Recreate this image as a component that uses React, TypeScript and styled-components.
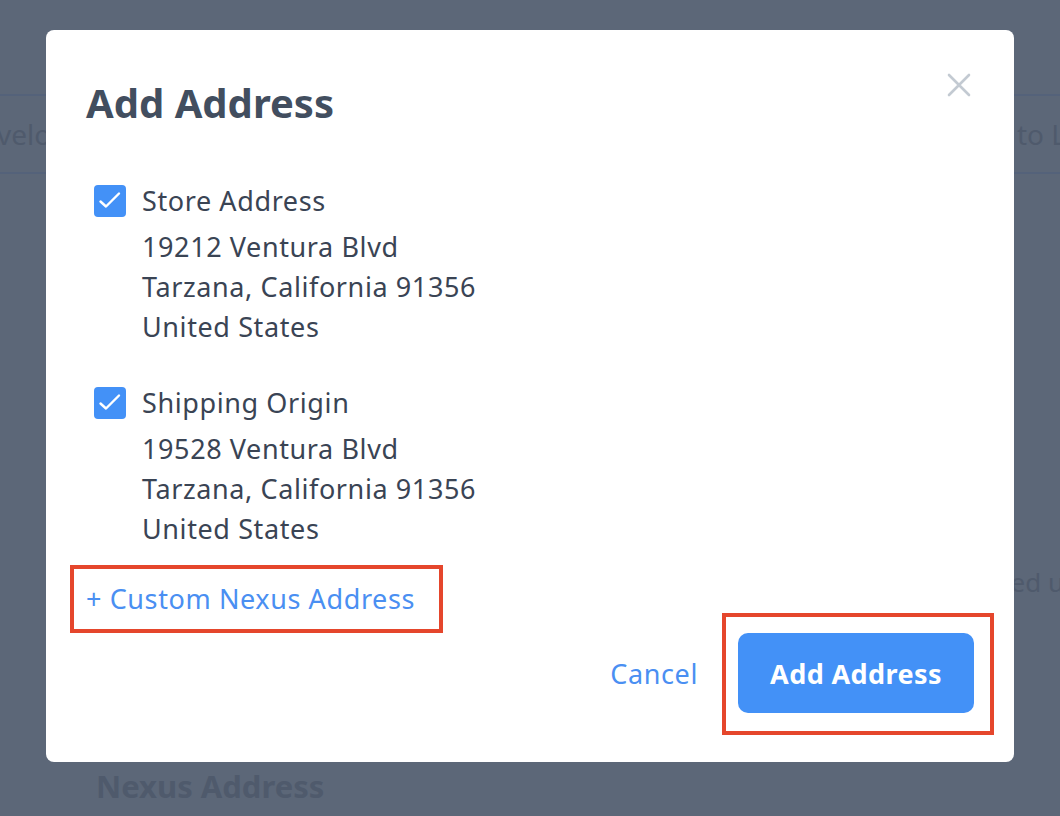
import React from "react";
import styled, { createGlobalStyle } from "styled-components";

const Global = createGlobalStyle`
  html, body { margin: 0; padding: 0; }
  body {
    width: 1060px;
    height: 816px;
    overflow: hidden;
    background: #5c6778;
    font-family: "Noto Sans", Lato, sans-serif;
  }
  * { box-sizing: border-box; }
`;

const Page = styled.div`
  position: relative;
  width: 1060px;
  height: 816px;
  overflow: hidden;
  background: #5c6778;
`;

const Backdrop = styled.div`
  display: flex;
  flex-direction: column;
  padding-top: 94px;
  height: 100%;
  color: #4f5a6c;
`;

const TabBar = styled.div`
  display: flex;
  justify-content: space-between;
  align-items: center;
  height: 80px;
  border-top: 2px solid #54627a;
  border-bottom: 2px solid #54627a;
  font-size: 28px;
  overflow: hidden;
`;

const TabText = styled.span<{ $edge: "left" | "right" }>`
  white-space: nowrap;
  margin-left: ${(p) => (p.$edge === "left" ? "-3px" : "0")};
  margin-right: ${(p) => (p.$edge === "right" ? "-6px" : "0")};
`;

const SideText = styled.div`
  align-self: flex-end;
  margin-top: 390px;
  margin-right: -4px;
  font-size: 26px;
  line-height: 36px;
`;

const BackHeading = styled.div`
  margin-top: 168px;
  margin-left: 96px;
  font-size: 31px;
  line-height: 36px;
  font-weight: 700;
`;

const Overlay = styled.div`
  position: absolute;
  inset: 0;
  padding: 30px 46px 54px;
`;

const Modal = styled.div`
  position: relative;
  display: flex;
  flex-direction: column;
  width: 968px;
  height: 732px;
  background: #ffffff;
  border-radius: 8px;
  padding: 55px 40px 26px;
`;

const Title = styled.h2`
  margin: 0;
  font-size: 40px;
  line-height: 36px;
  font-weight: 700;
  color: #424e5f;
`;

const CloseButton = styled.button`
  position: absolute;
  top: 40px;
  right: 40px;
  width: 30px;
  height: 30px;
  padding: 0;
  border: 0;
  background: transparent;
  color: #c3cad2;
  cursor: pointer;
  display: flex;
  align-items: center;
  justify-content: center;
`;

const List = styled.div`
  display: flex;
  flex-direction: column;
  gap: 40px;
  margin-top: 64px;
  padding-left: 8px;
`;

const Option = styled.label`
  display: grid;
  grid-template-columns: 32px 1fr;
  column-gap: 16px;
  color: #3a4454;
  font-size: 27px;
  letter-spacing: 0.6px;
  cursor: pointer;
`;

const Box = styled.span`
  grid-row: 1;
  width: 32px;
  height: 32px;
  border-radius: 4px;
  background: #4391f7;
  display: flex;
  align-items: center;
  justify-content: center;
`;

const OptionLabel = styled.span`
  line-height: 32px;
`;

const AddressLines = styled.div`
  grid-column: 2;
  margin-top: 10px;
  line-height: 40px;
`;

const Annotated = styled.div`
  border: 4px solid #e5462c;
`;

const CustomBox = styled(Annotated)`
  align-self: flex-start;
  margin-top: 16px;
  margin-left: -16px;
  padding: 12px 24px 12px 12px;
`;

const LinkButton = styled.button`
  border: 0;
  background: transparent;
  padding: 0;
  font-family: inherit;
  font-size: 27px;
  letter-spacing: 0.6px;
  line-height: 36px;
  color: #4a8ff2;
  cursor: pointer;
`;

const Footer = styled.div`
  display: flex;
  justify-content: flex-end;
  align-items: center;
  gap: 24px;
  margin-top: -20px;
  margin-right: -20px;
`;

const ButtonBox = styled(Annotated)`
  padding: 16px 16px 18px 12px;
`;

const Primary = styled.button`
  width: 236px;
  height: 80px;
  border: 0;
  border-radius: 10px;
  background: #4391f7;
  color: #ffffff;
  font-family: inherit;
  font-size: 27px;
  letter-spacing: 0.4px;
  font-weight: 700;
  cursor: pointer;
`;

const addresses = [
  {
    name: "Store Address",
    lines: ["19212 Ventura Blvd", "Tarzana, California 91356", "United States"],
  },
  {
    name: "Shipping Origin",
    lines: ["19528 Ventura Blvd", "Tarzana, California 91356", "United States"],
  },
];

const Check = () => (
  <svg width="32" height="32" viewBox="0 0 32 32" fill="none">
    <path d="M6.5 16.5l5.5 5 13-13" stroke="#fff" strokeWidth="2.4" strokeLinecap="round" strokeLinejoin="round" />
  </svg>
);

const CloseIcon = () => (
  <svg width="24" height="24" viewBox="0 0 24 24" fill="none">
    <path d="M2 2l20 20M22 2L2 22" stroke="currentColor" strokeWidth="2.6" strokeLinecap="round" />
  </svg>
);

export default function App() {
  return (
    <>
      <Global />
      <Page>
        <Backdrop>
          <TabBar>
            <TabText $edge="left">velo</TabText>
            <TabText $edge="right">to L</TabText>
          </TabBar>
          <SideText>ed u</SideText>
          <BackHeading>Nexus Address</BackHeading>
        </Backdrop>
        <Overlay>
          <Modal>
            <Title>Add Address</Title>
            <CloseButton aria-label="Close">
              <CloseIcon />
            </CloseButton>
            <List>
              {addresses.map((a) => (
                <Option key={a.name}>
                  <Box>
                    <Check />
                  </Box>
                  <OptionLabel>{a.name}</OptionLabel>
                  <AddressLines>
                    {a.lines.map((l) => (
                      <div key={l}>{l}</div>
                    ))}
                  </AddressLines>
                </Option>
              ))}
            </List>
            <CustomBox>
              <LinkButton>+ Custom Nexus Address</LinkButton>
            </CustomBox>
            <Footer>
              <LinkButton>Cancel</LinkButton>
              <ButtonBox>
                <Primary>Add Address</Primary>
              </ButtonBox>
            </Footer>
          </Modal>
        </Overlay>
      </Page>
    </>
  );
}
